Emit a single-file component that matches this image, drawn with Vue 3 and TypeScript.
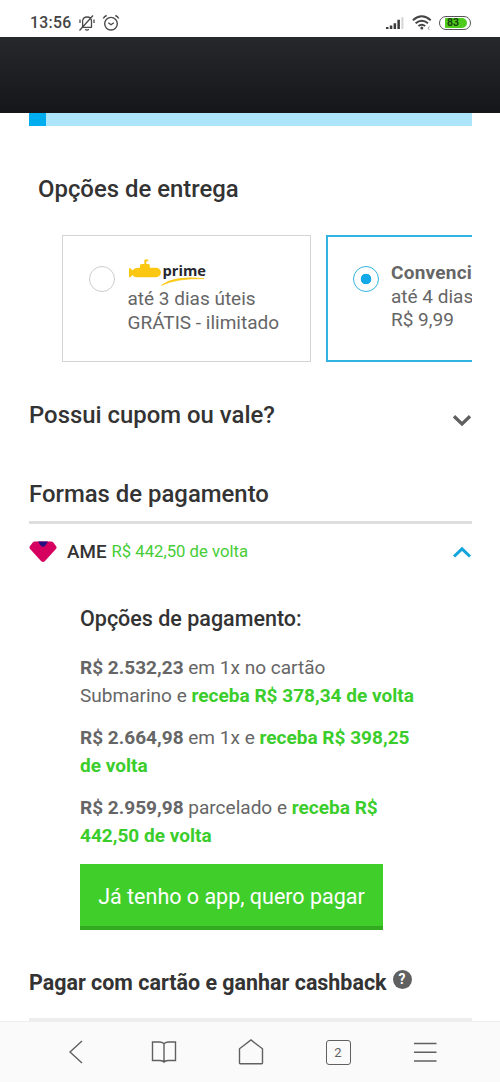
<script setup lang="ts">
interface PaymentOption {
  price: string
  terms: string
  reward: string
}

const options: PaymentOption[] = [
  { price: 'R$ 2.532,23', terms: 'em 1x no cartão Submarino e', reward: 'receba R$ 378,34 de volta' },
  { price: 'R$ 2.664,98', terms: 'em 1x e', reward: 'receba R$ 398,25 de volta' },
  { price: 'R$ 2.959,98', terms: 'parcelado e', reward: 'receba R$ 442,50 de volta' },
]
</script>

<template>
  <div class="screen">
    <header class="status">
      <span class="clock">13:56</span>
      <svg class="mute" width="18" height="18" viewBox="0 0 18 18" fill="none" stroke="#4a4a4a" stroke-width="1.3">
        <path d="M4 13.3h10M4.6 13V7.2C4.6 4.5 6.4 3 9 3s4.5 1.500 4.500 4.200V13M7.200 15.300q1.800 1.500 3.600 0M1.500 16.500L15 1.500M2 5.500v3.500M16 5.500v3.500" />
      </svg>
      <svg class="alarm" width="18" height="18" viewBox="0 0 18 18" fill="none" stroke="#4a4a4a" stroke-width="1.4">
        <circle cx="9" cy="9.700" r="6.300" />
        <path d="M6.300 8.700L9 10.700l2.800-2M1.300 4.500q1-2.300 3.400-3M16.700 4.500q-1-2.300-3.400-3" />
      </svg>
      <span class="spacer"></span>
      <svg class="signal" width="20" height="14" viewBox="0 0 20 14">
        <path d="M1 11h2.500v2H1zM4.800 9.500h2.500V13H4.800zM8.600 7.200h2.500V13H8.600zM12.400 3.800h2.500V13h-2.500z" fill="#3c3c3c" />
        <path d="M16.400 1.200h2V13h-2z" fill="#d4d4d4" />
      </svg>
      <svg class="wifi" width="20" height="16" viewBox="0 0 20 16" fill="none" stroke="#444" stroke-width="1.900">
        <path d="M.9 5.200q8.800-7.700 17.800 0M3.600 8.300q6.200-5.200 12.400 0M6.400 11.100q3.400-2.700 6.800 0" />
        <circle cx="9.800" cy="13" r="1.500" fill="#444" stroke="none" />
        <path d="M17.500 11.500l-1.500 2 1.500 1" stroke="#999" stroke-width="1" />
      </svg>
      <span class="battery"><span class="charge">83</span></span>
    </header>

    <div class="site-bar"></div>
    <main class="page">
      <div class="progress"><div class="done"></div></div>
      <h2 class="delivery-title">Opções de entrega</h2>
      <section class="cards">
        <label class="card">
          <span class="radio"></span>
          <span class="info">
            <svg class="prime" width="80" height="28" viewBox="0 0 80 28">
              <path d="M1 9.200h1.500l2 2.300C6 9.500 8 8.800 12 8.800V6.500q0-1.500 1.500-1.500h2.800V1.600q0-1 1-1h3v1.700h-2V5h2q1.500 0 1.500 1.500v2.300h6.400a4.700 4.700 0 0 1 0 9.400H9q-3 0-4.700-2.300l-1.800 2.400H1z" fill="#fcc711" />
              <text x="34.500" y="17" textLength="43.500" lengthAdjust="spacingAndGlyphs">prime</text>
              <path d="M33.500 26.300Q46 16.500 76 19.600Q49 19 33.500 26.300z" fill="#fcc711" stroke="#fcc711" stroke-width=".7" />
            </svg>
            <span class="line">até 3 dias úteis</span>
            <span class="line">GRÁTIS - ilimitado</span>
          </span>
        </label>
        <label class="card selected">
          <span class="radio"></span>
          <span class="info">
            <b class="line name">Convencional</b>
            <span class="line">até 4 dias úteis</span>
            <span class="line">R$ 9,99</span>
          </span>
        </label>
      </section>

      <section class="row coupon">
        <h2 class="coupon-title">Possui cupom ou vale?</h2>
        <svg width="20" height="13" viewBox="0 0 20 13"><path d="M2 2.300l8 7.700 8-7.700" fill="none" stroke="#606060" stroke-width="3.300" /></svg>
      </section>

      <h2 class="payment-title">Formas de pagamento</h2>
      <section class="row ame">
        <svg class="gem" width="28" height="22" viewBox="0 0 28 22">
          <path d="M6 .5h16q1.500 0 2.500 1.200l2.600 3.500q1 1.500-.2 2.900L16 20q-2 2-4 0L1.100 8.100q-1.200-1.400-.2-2.900l2.600-3.500Q4.500.5 6 .5z" fill="#d5005f" />
          <path d="M9 .5h10l-2.800 4.200Q14 6.700 11.800 4.700z" fill="#24117f" />
        </svg>
        <span class="ame-name">AME</span>
        <span class="ame-back">R$ 442,50 de volta</span>
        <svg class="collapse" width="20" height="13" viewBox="0 0 20 13"><path d="M2 10.500l8-7.700 8 7.700" fill="none" stroke="#12a5dc" stroke-width="3" /></svg>
      </section>

      <section class="details">
        <h3>Opções de pagamento:</h3>
        <p v-for="o in options" :key="o.price">
          <b>{{ o.price }}</b> {{ o.terms }} <b class="reward">{{ o.reward }}</b>
        </p>
        <button type="button"><span>Já tenho o app, quero pagar</span></button>
      </section>

      <section class="cashback">
        <h3>Pagar com cartão e ganhar cashback</h3>
        <span class="help">?</span>
      </section>
      <div class="divider"></div>
    </main>

    <nav class="toolbar">
      <svg width="26" height="28" viewBox="0 0 26 28"><path d="M19 3L7 14l12 11" /></svg>
      <svg width="26" height="28" viewBox="0 0 26 28"><path d="M1.500 4h7.500q3 .2 4 1.800Q14 4.200 17 4h7.500v18.500H17q-3 .2-4 1.500-1-1.300-4-1.500H1.500zM13 5.800V24" /></svg>
      <svg width="26" height="28" viewBox="0 0 26 28"><path d="M1.500 25V10.800L13 2l11.500 8.800V25q0 .7-.7.700H2.200q-.7 0-.7-.7z" /></svg>
      <span class="tabs">2</span>
      <svg width="26" height="28" viewBox="0 0 26 28"><path d="M2 5.500h22.500M2 14.300h22.500M2 23h22.500" /></svg>
    </nav>
  </div>
</template>

<style>
body {
  margin: 0;
  background: #fff;
}
</style>

<style scoped>
* {
  box-sizing: border-box;
}
.screen {
  width: 500px;
  height: 1082px;
  overflow: hidden;
  display: flex;
  flex-direction: column;
  background: #fff;
  color: #666;
  font-family: Roboto, 'Noto Sans', sans-serif;
}
h2,
h3,
p {
  margin: 0;
  white-space: nowrap;
}
h2,
h3 {
  color: #333;
  font-weight: 500;
}
svg {
  display: block;
  flex: none;
}
.status {
  height: 37px;
  flex: none;
  display: flex;
  align-items: center;
  padding: 9px 29px 0 30px;
}
.clock {
  width: 48px;
  color: #444;
  font-size: 15.800px;
  line-height: 20px;
  font-weight: 500;
  letter-spacing: 0.3px;
}
.alarm {
  margin-left: 6px;
}
.spacer {
  flex: 1;
}
.wifi {
  margin: 0 7px 0 7px;
}
.battery {
  width: 32px;
  height: 14px;
  padding: 1px;
  border: 1.5px solid #555;
  border-radius: 7px;
}
.charge {
  display: block;
  width: 22px;
  height: 10px;
  margin-left: 4px;
  border-radius: 1px 5px 5px 1px;
  background: #4ecb1c;
  color: #16420a;
  font-size: 10.500px;
  line-height: 10px;
  font-weight: 700;
  padding-left: 2px;
}
.site-bar {
  height: 76px;
  flex: none;
  background: linear-gradient(#26282b, #15161a);
}
.page {
  flex: 1;
  min-height: 0;
  padding: 0 28px 0 29px;
}
.progress {
  height: 13px;
  background: #ade5fa;
}
.done {
  width: 17px;
  height: 13px;
  background: #00adef;
}
.delivery-title {
  margin: 48px 0 0 9px;
  font-size: 23.900px;
  line-height: 30px;
}
.cards {
  display: flex;
  gap: 15px;
  margin: 31px 0 0 33px;
  overflow: hidden;
}
.card {
  display: flex;
  flex: none;
  width: 249px;
  height: 127px;
  border: 1.5px solid #d4d4d4;
  padding: 22px 0 0 26px;
}
.card.selected {
  border-color: #32b4e2;
  border-width: 2px;
  padding: 21px 0 0 25px;
}
.radio {
  flex: none;
  width: 26px;
  height: 26px;
  margin-top: 8px;
  border: 1.500px solid #ccc;
  border-radius: 50%;
}
.selected .radio {
  border-color: #32b4e2;
  background: radial-gradient(circle, #13a9e8 0 5px, #fff 5.600px);
}
.info {
  margin-left: 12.500px;
}
.selected .info {
  margin-left: 12px;
  padding-top: 3px;
}
.line {
  display: block;
  white-space: nowrap;
  font-size: 19px;
  line-height: 23.600px;
}
.name {
  font-weight: 700;
  letter-spacing: 0.25px;
}
.prime {
  height: 28px;
  margin-top: 1px;
}
.prime text {
  font: 700 15px 'Open Sans', sans-serif;
  fill: #25272c;
}
.row {
  display: flex;
  align-items: center;
}
.coupon {
  height: 30px;
  margin-top: 38px;
  justify-content: space-between;
}
.coupon svg {
  margin-top: 11px;
}
.coupon-title {
  font-size: 23.900px;
}
.payment-title {
  height: 45px;
  margin-top: 49px;
  border-bottom: 3px solid #dedede;
  font-size: 23.900px;
  line-height: 30px;
}
.ame {
  height: 55px;
}
.ame-name {
  margin-left: 10px;
  color: #333;
  font-size: 18.800px;
  font-weight: 500;
}
.ame-back {
  flex: 1;
  margin-left: 5px;
  color: #46cd35;
  font-size: 16.700px;
}
.collapse {
  margin-top: 2px;
}
.details {
  padding: 26px 0 0 51px;
}
.details h3 {
  font-size: 21.500px;
  line-height: 28px;
  margin-bottom: 21px;
}
.details p {
  width: 338px;
  white-space: normal;
  font-size: 19.050px;
  line-height: 28px;
  margin-bottom: 14px;
}
.details b {
  font-weight: 700;
}
.details .reward {
  color: #3bcd2b;
}
button {
  display: block;
  width: 303px;
  height: 66px;
  padding: 2px 0 0;
  border: 0;
  border-bottom: 4px solid #32ab20;
  background: #40ce2b;
  color: #fff;
  font: 400 21.500px Roboto, sans-serif;
}
.cashback {
  display: flex;
  align-items: center;
  height: 30px;
  margin-top: 37px;
}
.cashback h3 {
  font-size: 21.450px;
  font-weight: 700;
}
.help {
  width: 19px;
  height: 19px;
  margin: -5px 0 0 6px;
  border-radius: 50%;
  background: #606060;
  color: #fff;
  font-size: 14px;
  line-height: 19px;
  font-weight: 700;
  text-align: center;
}
.divider {
  height: 4px;
  margin-top: 21px;
  background: #ededed;
}
.toolbar {
  height: 61px;
  flex: none;
  display: flex;
  align-items: center;
  justify-content: space-between;
  padding: 0 62px 0 63px;
  border-top: 1px solid #eee;
  background: #fafafa;
}
.toolbar path {
  fill: none;
  stroke: #606060;
  stroke-width: 1.400;
}
.tabs {
  width: 25px;
  height: 25px;
  border: 1.500px solid #606060;
  border-radius: 3px;
  color: #606060;
  font-size: 13px;
  line-height: 23px;
  text-align: center;
}
</style>
